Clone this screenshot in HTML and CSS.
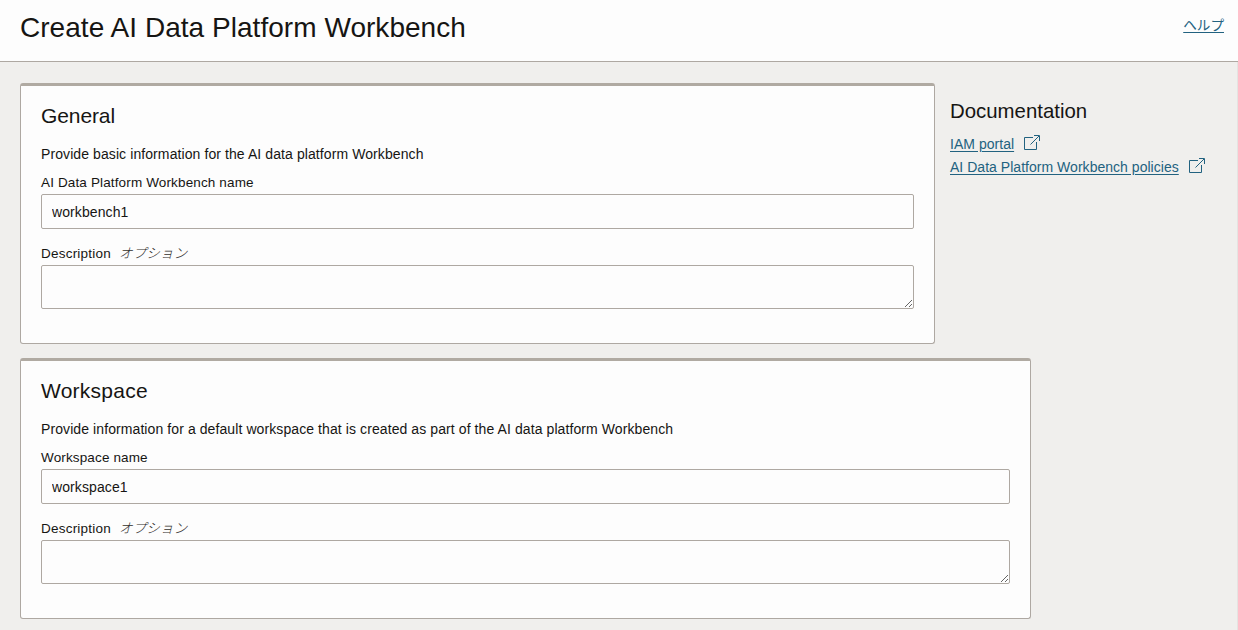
FILE: index.html
```html
<!DOCTYPE html>
<html lang="ja">
<head>
  <meta charset="UTF-8" />
  <title>Create AI Data Platform Workbench</title>
  <link rel="stylesheet" href="styles.css">
</head>
<body>

  <header class="page-header">
    <h1>Create AI Data Platform Workbench</h1>
    <a class="help" href="#">ヘルプ</a>
  </header>

  <main class="content">
    <div class="row">
      <section class="card general">
        <h2>General</h2>
        <p class="intro">Provide basic information for the AI data platform Workbench</p>
        <label for="wb-name">AI Data Platform Workbench name</label>
        <input type="text" id="wb-name" value="workbench1" />
        <label for="wb-desc">Description <em>オプション</em></label>
        <textarea id="wb-desc"></textarea>
      </section>

      <aside class="docs">
        <h2>Documentation</h2>
        <div class="doc-link">
          <a href="#">IAM portal</a>
          <svg width="16" height="16" viewBox="0 0 16 16"><path d="M9 2.5H.5v12h12V7M6.5 9.5L15 1M10 .5h5.5V6" /></svg>
        </div>
        <div class="doc-link">
          <a href="#">AI Data Platform Workbench policies</a>
          <svg width="16" height="16" viewBox="0 0 16 16"><path d="M9 2.5H.5v12h12V7M6.5 9.5L15 1M10 .5h5.5V6" /></svg>
        </div>
      </aside>
    </div>

    <section class="card workspace">
      <h2>Workspace</h2>
      <p class="intro">Provide information for a default workspace that is created as part of the AI data platform Workbench</p>
      <label for="ws-name">Workspace name</label>
      <input type="text" id="ws-name" value="workspace1" />
      <label for="ws-desc">Description <em>オプション</em></label>
      <textarea id="ws-desc"></textarea>
    </section>
  </main>

</body>
</html>
```

FILE: styles.css
```css
* {
  box-sizing: border-box;
}
body {
  margin: 0;
  height: 630px;
  overflow: hidden;
  background-color: #f0efed;
  color: #161513;
  font-family: "Liberation Sans", "Noto Sans CJK JP", sans-serif;
  font-size: 14px;
  line-height: 20px;
}
h1, h2, p {
  margin: 0;
  font-weight: normal;
}
a {
  color: #226280;
  text-underline-offset: 2px;
}
.page-header {
  display: flex;
  justify-content: space-between;
  height: 62px;
  padding: 10px 14px 0 20px;
  background-color: #fdfdfd;
  border-bottom: 1px solid #aea8a2;
}
.page-header h1 {
  font-size: 28px;
  line-height: 36px;
  letter-spacing: 0.04px;
}
.help {
  margin-top: 6px;
  font-size: 13.6px;
}
.content {
  display: flex;
  flex-direction: column;
  gap: 14px;
  height: 568px;
  padding: 21px 0 0 20px;
  border-right: 1px solid #e5e3e1;
}
.row {
  display: flex;
  gap: 15px;
}
.card {
  display: flex;
  flex-direction: column;
  flex-shrink: 0;
  height: 261px;
  padding: 16px 20px 0;
  background-color: #fdfdfd;
  border: 1px solid #aea8a2;
  border-top: 3px solid #b0aaa2;
  border-radius: 3px;
}
.general {
  width: 915px;
}
.workspace {
  width: 1011px;
}
h2 {
  font-size: 21px;
  line-height: 28px;
}
.general h2 {
  letter-spacing: -0.1px;
}
.workspace h2 {
  letter-spacing: 0.25px;
}
.intro {
  margin: 14px 0 9px;
  letter-spacing: 0.09px;
}
label {
  height: 20px;
  margin-bottom: 1px;
  font-size: 13.5px;
  letter-spacing: 0.14px;
}
label[for$="desc"] {
  letter-spacing: 0.22px;
}
label em {
  margin-left: 4px;
  color: #33312e;
  font-weight: 300;
}
input, textarea {
  width: 100%;
  color: #161513;
  background-color: #fdfdfd;
  border: 1px solid #aea8a2;
  border-radius: 2px;
  font: inherit;
  letter-spacing: 0.1px;
}
input {
  height: 35px;
  margin-bottom: 15px;
  padding: 0 10px;
}
textarea {
  height: 44px;
  padding: 6px 10px;
  resize: vertical;
}
.docs {
  padding-top: 14px;
}
.docs h2 {
  margin-bottom: 9px;
  font-size: 20.4px;
}
.doc-link {
  display: flex;
  gap: 10px;
  height: 23px;
  white-space: nowrap;
  letter-spacing: 0.03px;
}
.doc-link svg {
  margin-top: 1px;
  fill: none;
  stroke: #226280;
}
```
